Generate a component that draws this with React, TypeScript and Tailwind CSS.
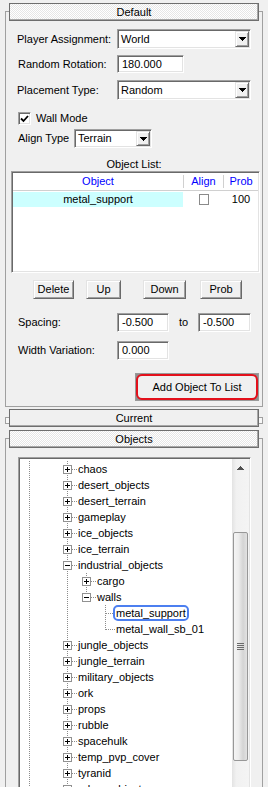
import React from "react"

const sunken =
  "border border-t-[#a0a0a0] border-l-[#a0a0a0] border-r-white border-b-white p-px shadow-[inset_1px_1px_0_#696969,inset_-1px_-1px_0_#e3e3e3] bg-white"
const raised =
  "border border-t-[#e3e3e3] border-l-[#e3e3e3] border-r-[#696969] border-b-[#696969] shadow-[inset_1px_1px_0_#ffffff,inset_-1px_-1px_0_#a0a0a0] bg-[#f0f0f0]"
const checker =
  "bg-[image:repeating-conic-gradient(#ffffff_0%_25%,#e6e6e6_0%_50%)] bg-[length:2px_2px]"

const DOT = "#8c8c8c"

function Tri({ up }: { up?: boolean }) {
  return (
    <svg width="7" height="4" className={up ? "rotate-180" : ""} shapeRendering="crispEdges">
      <path d="M0 0H7V1H6V2H5V3H4V4H3V3H2V2H1V1H0Z" fill={up ? "#505050" : "#000"} />
    </svg>
  )
}

function Combo({ w, value }: { w: string; value: string }) {
  return (
    <div className={`${w} h-full flex ${sunken}`}>
      <div className="flex-1 pl-[2px] flex items-center">{value}</div>
      <div className={`w-[14px] flex items-center justify-center ${raised}`}>
        <Tri />
      </div>
    </div>
  )
}

function Field({ w, value }: { w: string; value: string }) {
  return <div className={`${w} h-full flex items-center pl-[4px] ${sunken}`}>{value}</div>
}

function Btn({ w, ml, label }: { w: string; ml: string; label: string }) {
  return <div className={`${w} ${ml} h-full flex items-center justify-center ${raised}`}>{label}</div>
}

function RollHeader({ title, open }: { title: string; open?: boolean }) {
  return (
    <div
      className={`w-[250px] h-[18px] border border-[#6e6e6e] shadow-[inset_-1px_-1px_0_#a8a8a8] flex items-center justify-center ${
        open ? checker : "bg-[#f0f0f0]"
      }`}
    >
      {title}
    </div>
  )
}

type TreeRow = { label: string; anc: boolean[]; last?: boolean; box?: "+" | "-"; focus?: boolean }

const L1 = [true, false]
const L2 = [true, false, true]
const L3 = [true, false, true, false]

const rows: TreeRow[] = [
  { label: "chaos", anc: L1, box: "+" },
  { label: "desert_objects", anc: L1, box: "+" },
  { label: "desert_terrain", anc: L1, box: "+" },
  { label: "gameplay", anc: L1, box: "+" },
  { label: "ice_objects", anc: L1, box: "+" },
  { label: "ice_terrain", anc: L1, box: "+" },
  { label: "industrial_objects", anc: L1, box: "-" },
  { label: "cargo", anc: L2, box: "+" },
  { label: "walls", anc: L2, box: "-", last: true },
  { label: "metal_support", anc: L3, focus: true },
  { label: "metal_wall_sb_01", anc: L3, last: true },
  { label: "jungle_objects", anc: L1, box: "+" },
  { label: "jungle_terrain", anc: L1, box: "+" },
  { label: "military_objects", anc: L1, box: "+" },
  { label: "ork", anc: L1, box: "+" },
  { label: "props", anc: L1, box: "+" },
  { label: "rubble", anc: L1, box: "+" },
  { label: "spacehulk", anc: L1, box: "+" },
  { label: "temp_pvp_cover", anc: L1, box: "+" },
  { label: "tyranid", anc: L1, box: "+" },
  { label: "urban_objects", anc: L1, box: "+" },
]

function LineCell({ on }: { on: boolean }) {
  return (
    <svg width="19" height="16" className="shrink-0" shapeRendering="crispEdges">
      {on && <line x1="9.5" y1="0" x2="9.5" y2="16" stroke={DOT} strokeDasharray="1 1" />}
    </svg>
  )
}

function NodeCell({ last, box }: { last?: boolean; box?: "+" | "-" }) {
  return (
    <svg width="19" height="16" className="shrink-0" shapeRendering="crispEdges">
      <line x1="9.5" y1="0" x2="9.5" y2={last ? 9 : 16} stroke={DOT} strokeDasharray="1 1" />
      <line x1="10" y1="8.5" x2="19" y2="8.5" stroke={DOT} strokeDasharray="1 1" />
      {box && (
        <>
          <rect x="5.5" y="4.5" width="8" height="8" fill="#fff" stroke="#919191" />
          <line x1="7" y1="8.5" x2="12" y2="8.5" stroke="#000" />
          {box === "+" && <line x1="9.5" y1="6" x2="9.5" y2="11" stroke="#000" />}
        </>
      )}
    </svg>
  )
}

export default function App() {
  return (
    <div className="flow-root w-[268px] h-[787px] overflow-hidden bg-[#f0f0f0] text-[11px] leading-none text-black font-['Liberation_Sans',Arial,sans-serif]">
      {/* Default rollout */}
      <div className="mt-[11px] mx-[5px] h-[396px] border border-[#a0a0a0]">
        <div className="-mt-[9px] ml-[3px]">
          <RollHeader title="Default" open />
        </div>

        <div className="mt-[8px] h-[20px] flex items-center pl-[11px]">
          <span className="w-[100px]">Player Assignment:</span>
          <Combo w="w-[134px]" value="World" />
        </div>
        <div className="mt-[6px] h-[18px] flex items-center pl-[12px]">
          <span className="w-[99px]">Random Rotation:</span>
          <Field w="w-[67px]" value="180.000" />
        </div>
        <div className="mt-[7px] h-[20px] flex items-center pl-[11px]">
          <span className="w-[100px]">Placement Type:</span>
          <Combo w="w-[134px]" value="Random" />
        </div>
        <div className="mt-[12px] h-[13px] flex items-center pl-[12px]">
          <div className={`w-[13px] h-[13px] ${sunken} p-0 flex items-center justify-center`}>
            <svg width="9" height="9">
              <path d="M1 4.5L3.5 7L8 2" fill="none" stroke="#000" strokeWidth="1.8" />
            </svg>
          </div>
          <span className="ml-[5px]">Wall Mode</span>
        </div>
        <div className="mt-[4px] h-[19px] flex items-center pl-[12px]">
          <span className="w-[56px]">Align Type</span>
          <Combo w="w-[78px]" value="Terrain" />
        </div>
        <div className="mt-[9px] h-[14px] flex items-center justify-center">Object List:</div>

        {/* object list */}
        <div className={`ml-[5px] w-[249px] h-[102px] ${sunken}`}>
          <div className="h-[18px] flex border-b border-[#d0d0d0] text-[#0000ff]">
            <div className="w-[170px] flex items-center justify-center">Object</div>
            <div className="w-px my-[2px] bg-[#d0d0d0]" />
            <div className="w-[39px] flex items-center justify-center">Align</div>
            <div className="w-px my-[2px] bg-[#d0d0d0]" />
            <div className="flex-1 flex items-center justify-center">Prob</div>
          </div>
          <div className="mt-px h-[15px] flex">
            <div className="w-[170px] bg-[#ccffff] flex items-center justify-center">metal_support</div>
            <div className="w-[41px] flex items-center justify-center">
              <div className="w-[10px] h-[11px] border border-[#8a8a8a] bg-white" />
            </div>
            <div className="flex-1 flex items-center justify-center">100</div>
          </div>
        </div>

        <div className="mt-[7px] h-[19px] flex">
          <Btn w="w-[41px]" ml="ml-[27px]" label="Delete" />
          <Btn w="w-[35px]" ml="ml-[12px]" label="Up" />
          <Btn w="w-[43px]" ml="ml-[22px]" label="Down" />
          <Btn w="w-[42px]" ml="ml-[14px]" label="Prob" />
        </div>

        <div className="mt-[14px] h-[19px] flex items-center pl-[12px]">
          <span className="w-[99px]">Spacing:</span>
          <Field w="w-[52px]" value="-0.500" />
          <span className="ml-[10px] w-[19px]">to</span>
          <Field w="w-[53px]" value="-0.500" />
        </div>
        <div className="mt-[9px] h-[19px] flex items-center pl-[12px]">
          <span className="w-[99px]">Width Variation:</span>
          <Field w="w-[52px]" value="0.000" />
        </div>

        <div className="mt-[13px] ml-[129px] w-[124px] h-[28px] border border-[#9a9a9a] bg-[#8f8f8f]">
          <div className="h-full rounded-[6px] border-2 border-[#e3101b] bg-[#f0f0f0] flex items-center justify-center">
            Add Object To List
          </div>
        </div>
      </div>

      {/* Current rollout (closed) */}
      <div className="mt-[2px] ml-[5px] flex items-start">
        <div className="mt-[8px] w-[4px] h-[7px] border border-r-0 border-[#a0a0a0] bg-[#f8f8f8]" />
        <RollHeader title="Current" />
        <div className="mt-[8px] w-[4px] h-[7px] border border-l-0 border-[#a0a0a0] bg-[#f8f8f8]" />
      </div>

      {/* Objects rollout */}
      <div className="mt-[11px] mx-[5px] h-[360px] border border-b-0 border-[#a0a0a0]">
        <div className="-mt-[9px] ml-[3px]">
          <RollHeader title="Objects" open />
        </div>

        <div className={`mt-[9px] ml-[12px] w-[233px] h-[360px] flex ${sunken}`}>
          <div className="flex-1 overflow-hidden pt-[2px]">
            {rows.map(r => (
              <div key={r.label} className="h-[16px] flex items-center whitespace-nowrap">
                {r.anc.map((on, i) => (
                  <LineCell key={i} on={on} />
                ))}
                <NodeCell last={r.last} box={r.box} />
                {r.focus ? (
                  <span className="-ml-[2px] h-[16px] px-px border-2 border-[#4c7ff0] rounded-[5px] flex items-center">
                    {r.label}
                  </span>
                ) : (
                  <span className="ml-px leading-[16px]">{r.label}</span>
                )}
              </div>
            ))}
          </div>

          {/* scrollbar */}
          <div className="w-[17px] flex flex-col bg-[linear-gradient(to_right,#e3e3e3,#f1f1f1_25%,#f4f4f4)]">
            <div className="h-[17px] flex items-center justify-center">
              <Tri up />
            </div>
            <div className="mt-[56px] ml-px w-[15px] h-[229px] rounded-[2px] border border-[#979797] bg-[linear-gradient(to_right,#f4f4f4,#ececec_35%,#d4d4d4_70%,#e2e2e2)] flex items-center justify-center">
              <svg width="7" height="7" shapeRendering="crispEdges">
                {[0, 2, 4, 6].map(y => (
                  <line key={y} x1="0" y1={y + 0.5} x2="7" y2={y + 0.5} stroke="#6a6a6a" />
                ))}
              </svg>
            </div>
          </div>
        </div>
      </div>
    </div>
  )
}
